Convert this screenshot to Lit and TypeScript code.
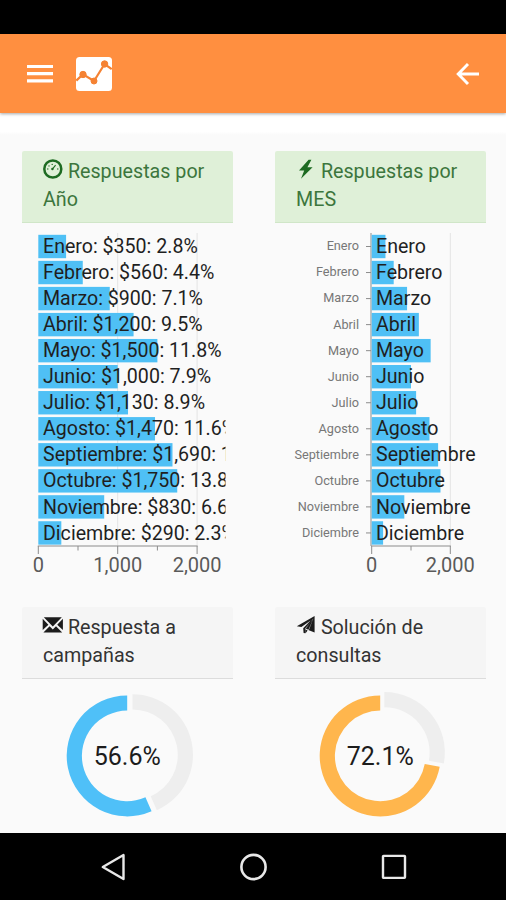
import { LitElement, html, css, svg } from "lit";
import { customElement, property } from "lit/decorators.js";

type Row = [string, number, string];

const MONTHS: Row[] = [
  ["Enero", 350, "2.8%"],
  ["Febrero", 560, "4.4%"],
  ["Marzo", 900, "7.1%"],
  ["Abril", 1200, "9.5%"],
  ["Mayo", 1500, "11.8%"],
  ["Junio", 1000, "7.9%"],
  ["Julio", 1130, "8.9%"],
  ["Agosto", 1470, "11.6%"],
  ["Septiembre", 1690, "13.3%"],
  ["Octubre", 1750, "13.8%"],
  ["Noviembre", 830, "6.6%"],
  ["Diciembre", 290, "2.3%"],
];

const money = (n: number) => n.toLocaleString("en-US");

const ICONS: Record<string, unknown> = {
  gauge: svg`<circle cx="9.8" cy="10" r="8.5" fill="none" stroke="currentColor" stroke-width="2.5"/>
    <g fill="currentColor"><circle cx="4.8" cy="10" r=".7"/><circle cx="6" cy="6.9" r=".7"/><circle cx="9.2" cy="5.4" r=".7"/><circle cx="14.8" cy="10" r=".7"/></g>
    <path d="M9.2 10.4 12.6 6.2" stroke="currentColor" stroke-width="1.1"/><circle cx="9.4" cy="10" r="1.2" fill="currentColor"/>`,
  flash: svg`<path d="M12.6.8 3 11.6H8.2L5 19.8 16.6 8.2H11.4L15.4.8Z" fill="currentColor"/>`,
  mail: svg`<path d="M.8 2.2H18.8L9.8 11.6ZM-.3 3.8 5.4 9.8-.3 15ZM19.9 3.8V15L14.2 9.8ZM6.6 11.2 9.8 14.4 13 11.2 19.2 17.4H.4Z" fill="currentColor"/>`,
  send: svg`<path d="M18.6 1V17.4L12.3 14.9 17 4.6 9.4 13.2V18.2L7.6 18 7.2 13.2 14.6 5.4 5.4 12 .8 11.2ZM9.6 18.2 11.6 15.4 9.6 14.6ZM17.4 3.6 9.8 13.4 12.8 14.9Z" fill="currentColor"/>`,
};

@customElement("panel-heading")
class PanelHeading extends LitElement {
  @property() icon = "";
  @property() tone = "plain";
  static styles = css`
    :host { display: block; }
    .head {
      box-sizing: border-box;
      height: 72px;
      padding: 7px 21px 0;
      border-bottom: 1px solid #dcdcdc;
      background: #f5f5f5;
      color: #333;
      font: 19.7px/28px Roboto, sans-serif;
      border-radius: 2px 2px 0 0;
    }
    .success { background: #dff0d8; border-color: #d0e6c8; color: #3c763d; }
    svg { width: 20px; height: 20px; vertical-align: -1px; overflow: visible; }
    .success svg { color: #1d6b22; }
    .plain svg { color: #1c1c1c; }
  `;
  render() {
    return html`<div class="head ${this.tone}"><svg viewBox="0 0 20 20">${ICONS[this.icon]}</svg> <slot></slot></div>`;
  }
}

@customElement("bar-chart")
class BarChart extends LitElement {
  @property({ type: Boolean }) categories = false;
  static styles = css`
    :host { display: block; }
    svg { display: block; width: 211px; height: 384px; font-family: Roboto, sans-serif; }
    .bar { fill: #4fc0f5; }
    .grid { stroke: #e4e4e4; }
    .axis { stroke: #8c8c8c; }
    .label { font-size: 19.6px; fill: #1f1f1f; }
    .value { font-size: 20px; fill: #5a5a5a; text-anchor: middle; }
    .cat { font-size: 12.7px; fill: #777; text-anchor: end; }
  `;
  render() {
    const c = this.categories;
    const x0 = c ? 96.7 : 16.3;
    const unit = c ? 0.0393 : 0.0794;
    const at = (v: number) => x0 + v * unit;
    const majors = c ? [0, 2000] : [0, 1000, 2000];
    const minors = c ? [1000] : [500, 1500];
    const line = (cls: string, x1: number, y1: number, x2: number, y2: number) =>
      svg`<line class=${cls} x1=${x1} y1=${y1} x2=${x2} y2=${y2} />`;
    return html`<svg viewBox="0 0 211 384">
      <defs><clipPath id="plot"><rect width="203.5" height="384" /></clipPath></defs>
      ${majors.slice(1).map((v) => line("grid", at(v), 10, at(v), 323))}
      ${c ? line("axis", x0 - 0.7, 10, x0 - 0.7, 323) : null}
      <g clip-path=${c ? "none" : "url(#plot)"}>
        ${MONTHS.map(([name, v, pct], i) => {
          const y = 11.8 + i * 26.04;
          return svg`
            <rect class="bar" x=${x0} y=${y} width=${v * unit} height="23.4" />
            <text class="label" x=${x0 + (c ? 4.3 : 4.7)} y=${y + 18.3}>${c ? name : `${name}: $${money(v)}: ${pct}`}</text>
            ${c ? svg`<text class="cat" x="84" y=${y + 15.6}>${name}</text>${line("axis", 91, y + 11.7, 96, y + 11.7)}` : null}`;
        })}
      </g>
      ${line("axis", x0 - 0.5, 323, at(2000) + 0.5, 323)}
      ${majors.map((v) => svg`${line("axis", at(v), 323, at(v), 331)}<text class="value" x=${at(v)} y="349.4">${money(v)}</text>`)}
      ${minors.map((v) => line("axis", at(v), 323, at(v), 327.5))}
    </svg>`;
  }
}

@customElement("donut-chart")
class DonutChart extends LitElement {
  @property({ type: Number }) value = 0;
  @property() color = "";
  static styles = css`
    :host { display: block; }
    svg { display: block; width: 211px; height: 154px; font-family: Roboto, sans-serif; }
    .rest { fill: #eee; }
    .value { font-size: 25px; fill: #1c1c1c; text-anchor: middle; }
  `;
  private slice(from: number, to: number) {
    const p = (deg: number, r: number) => {
      const a = (deg * Math.PI) / 180;
      return `${105.2 + r * Math.sin(a)} ${76.9 - r * Math.cos(a)}`;
    };
    const big = to - from > 180 ? 1 : 0;
    return `M${p(from, 60.5)}A60.5 60.5 0 ${big} 1 ${p(to, 60.5)}L${p(to, 45.3)}A45.3 45.3 0 ${big} 0 ${p(from, 45.3)}Z`;
  }
  render() {
    const split = 360 - this.value * 3.6;
    const mid = (split * Math.PI) / 360;
    return html`<svg viewBox="0 0 211 154">
      <path class="rest" d=${this.slice(0, split)} transform="translate(${5.4 * Math.sin(mid)} ${-5.4 * Math.cos(mid)})" />
      <path fill=${this.color} d=${this.slice(split, 360)} />
      <text class="value" x="105.3" y="86">${this.value}%</text>
    </svg>`;
  }
}

@customElement("app-root")
class AppRoot extends LitElement {
  static styles = css`
    :host {
      display: flex;
      flex-direction: column;
      height: 900px;
      overflow: hidden;
      background: #fafafa;
      font-family: Roboto, sans-serif;
    }
    svg { display: block; }
    .status { height: 34px; background: #000; flex: none; }
    .bar {
      display: flex;
      align-items: center;
      flex: none;
      height: 79px;
      box-sizing: border-box;
      padding: 0 26px;
      background: #ff8f40;
      box-shadow: 0 1px 3px rgba(0, 0, 0, 0.35);
      z-index: 1;
    }
    .logo { margin-left: 22px; }
    .back { margin-left: auto; }
    .strip { height: 22px; flex: none; background: linear-gradient(#fff 85%, #fafafa); }
    .panels {
      flex: 1;
      display: grid;
      grid-template-columns: 211px 211px;
      grid-template-rows: 456px auto;
      column-gap: 42px;
      padding: 16px 0 0 22px;
      align-content: start;
    }
    .nav {
      display: flex;
      justify-content: space-between;
      align-items: center;
      height: 67px;
      box-sizing: border-box;
      padding: 0 98px 0 100px;
      background: #000;
      flex: none;
    }
  `;
  render() {
    return html`
      <div class="status"></div>
      <header class="bar">
        <svg width="28" height="20" viewBox="0 0 28 20"><path d="M1 2.5H27M1 9.7H27M1 16.9H27" stroke="#fff" stroke-width="3.2" /></svg>
        <svg class="logo" width="36" height="34" viewBox="0 0 36 34">
          <rect width="36" height="34" rx="3.5" fill="#fff" />
          <g stroke="#f58233" fill="#f58233"><path d="M.3 23.6 7 17.3 18 24 28.6 7 35.7 12.2" fill="none" stroke-width="2.2" /><circle cx="7" cy="17.5" r="3.2" /><circle cx="18" cy="24" r="3" /><circle cx="28.6" cy="7" r="3.2" /></g>
        </svg>
        <svg class="back" width="24" height="24" viewBox="0 0 24 24"><path d="M23 12H2.5M12 2 2.2 12 12 22" fill="none" stroke="#fff" stroke-width="2.9" /></svg>
      </header>
      <div class="strip"></div>
      <main class="panels">
        <section><panel-heading icon="gauge" tone="success">Respuestas por Año</panel-heading><bar-chart></bar-chart></section>
        <section><panel-heading icon="flash" tone="success">Respuestas por MES</panel-heading><bar-chart categories></bar-chart></section>
        <section><panel-heading icon="mail">Respuesta a campañas</panel-heading><donut-chart value="56.6" color="#4fc0f8"></donut-chart></section>
        <section><panel-heading icon="send">Solución de consultas</panel-heading><donut-chart value="72.1" color="#ffb64d"></donut-chart></section>
      </main>
      <nav class="nav">
        <svg width="28" height="28" viewBox="0 0 28 28"><path d="M2.8 14 23.5 2V26Z" fill="none" stroke="#e8e8e8" stroke-width="2.4" stroke-linejoin="round" /></svg>
        <svg width="28" height="28" viewBox="0 0 28 28"><circle cx="13.5" cy="14" r="12.1" fill="none" stroke="#e8e8e8" stroke-width="2.6" /></svg>
        <svg width="28" height="28" viewBox="0 0 28 28"><rect x="3" y="2.9" width="22" height="22" rx=".6" fill="none" stroke="#e8e8e8" stroke-width="2.4" /></svg>
      </nav>
    `;
  }
}
